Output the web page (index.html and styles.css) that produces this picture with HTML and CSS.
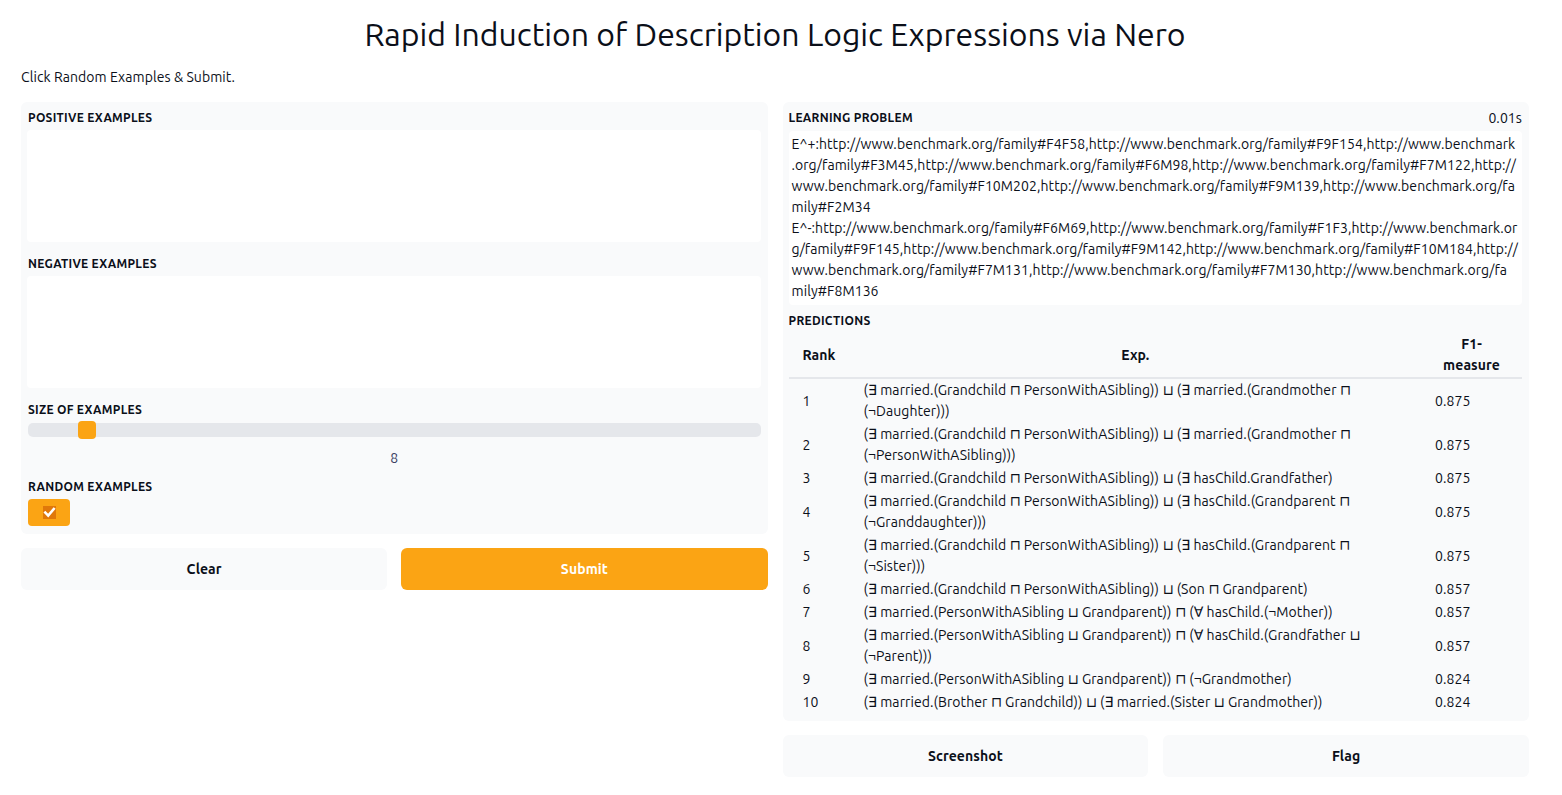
FILE: index.html
```html
<!DOCTYPE html>
<html>
<head>
<meta charset="utf-8">
<link rel="stylesheet" href="styles.css">
</head>
<body>
<div class="page">
  <h1 class="title">Rapid Induction of Description Logic Expressions via Nero</h1>
  <p class="intro">Click Random Examples &amp; Submit.</p>
  <div class="columns">
    <div class="col">
      <div class="panel left-panel">
        <div class="label">POSITIVE EXAMPLES</div>
        <div class="textarea"></div>
        <div class="label gap-top">NEGATIVE EXAMPLES</div>
        <div class="textarea"></div>
        <div class="label gap-top">SIZE OF EXAMPLES</div>
        <div class="slider"><div class="thumb"></div></div>
        <div class="slider-value">8</div>
        <div class="label rand-label">RANDOM EXAMPLES</div>
        <div class="checkbox">
          <div class="check-inner">
            <svg width="13" height="13" viewBox="0 0 13 13"><path d="M2.3 6.6 L5.2 9.6 L10.8 3.0" fill="none" stroke="#fff" stroke-width="2.6" stroke-linecap="square"/></svg>
          </div>
        </div>
      </div>
      <div class="btn-row">
        <div class="btn">Clear</div>
        <div class="btn btn-primary">Submit</div>
      </div>
    </div>
    <div class="col">
      <div class="panel right-panel">
        <div class="label-row"><span class="label label-flush">LEARNING PROBLEM</span><span class="time">0.01s</span></div>
        <div class="lp-box">
          <span class="ln">E^+:http://www.benchmark.org/family#F4F58,http://www.benchmark.org/family#F9F154,http://www.benchmark</span>
          <span class="ln">.org/family#F3M45,http://www.benchmark.org/family#F6M98,http://www.benchmark.org/family#F7M122,http://</span>
          <span class="ln">www.benchmark.org/family#F10M202,http://www.benchmark.org/family#F9M139,http://www.benchmark.org/fa</span>
          <span class="ln">mily#F2M34</span>
          <span class="ln">E^-:http://www.benchmark.org/family#F6M69,http://www.benchmark.org/family#F1F3,http://www.benchmark.or</span>
          <span class="ln">g/family#F9F145,http://www.benchmark.org/family#F9M142,http://www.benchmark.org/family#F10M184,http://</span>
          <span class="ln">www.benchmark.org/family#F7M131,http://www.benchmark.org/family#F7M130,http://www.benchmark.org/fa</span>
          <span class="ln">mily#F8M136</span>
        </div>
        <div class="label label-flush pred-label">PREDICTIONS</div>
        <table class="pred">
          <thead>
            <tr><th class="c-rank">Rank</th><th class="c-exp">Exp.</th><th class="c-f1">F1-<br>measure</th></tr>
          </thead>
          <tbody>
            <tr><td>1</td><td>(∃ married.(Grandchild ⊓ PersonWithASibling)) ⊔ (∃ married.(Grandmother ⊓<br>(¬Daughter)))</td><td>0.875</td></tr>
            <tr><td>2</td><td>(∃ married.(Grandchild ⊓ PersonWithASibling)) ⊔ (∃ married.(Grandmother ⊓<br>(¬PersonWithASibling)))</td><td>0.875</td></tr>
            <tr><td>3</td><td>(∃ married.(Grandchild ⊓ PersonWithASibling)) ⊔ (∃ hasChild.Grandfather)</td><td>0.875</td></tr>
            <tr><td>4</td><td>(∃ married.(Grandchild ⊓ PersonWithASibling)) ⊔ (∃ hasChild.(Grandparent ⊓<br>(¬Granddaughter)))</td><td>0.875</td></tr>
            <tr><td>5</td><td>(∃ married.(Grandchild ⊓ PersonWithASibling)) ⊔ (∃ hasChild.(Grandparent ⊓<br>(¬Sister)))</td><td>0.875</td></tr>
            <tr><td>6</td><td>(∃ married.(Grandchild ⊓ PersonWithASibling)) ⊔ (Son ⊓ Grandparent)</td><td>0.857</td></tr>
            <tr><td>7</td><td>(∃ married.(PersonWithASibling ⊔ Grandparent)) ⊓ (∀ hasChild.(¬Mother))</td><td>0.857</td></tr>
            <tr><td>8</td><td>(∃ married.(PersonWithASibling ⊔ Grandparent)) ⊓ (∀ hasChild.(Grandfather ⊔<br>(¬Parent)))</td><td>0.857</td></tr>
            <tr><td>9</td><td>(∃ married.(PersonWithASibling ⊔ Grandparent)) ⊓ (¬Grandmother)</td><td>0.824</td></tr>
            <tr><td>10</td><td>(∃ married.(Brother ⊓ Grandchild)) ⊔ (∃ married.(Sister ⊔ Grandmother))</td><td>0.824</td></tr>
          </tbody>
        </table>
      </div>
      <div class="btn-row btn-row-right">
        <div class="btn">Screenshot</div>
        <div class="btn">Flag</div>
      </div>
    </div>
  </div>
</div>
</body>
</html>
```
FILE: styles.css
```css
* { box-sizing: border-box; }
html, body { margin: 0; padding: 0; background: #fff; }
body {
  font-family: "Ubuntu", "Lato", "Noto Sans", "DejaVu Sans", sans-serif;
  color: #0b0f19;
  font-size: 14px;
  letter-spacing: 0.08px;
}
.page {
  width: 1529px;
  padding: 14px 0 0 21px;
}
.title {
  margin: 0;
  font-size: 32px;
  font-weight: 400;
  text-align: center;
  line-height: 40px;
  height: 40px;
  letter-spacing: 0;
}
.intro {
  margin: 13px 0 0 0;
  line-height: 20px;
  font-size: 14px;
}
.columns {
  display: flex;
  gap: 15px;
  margin-top: 15px;
  align-items: flex-start;
}
.col { flex: 1 1 0; display: flex; flex-direction: column; gap: 14px; }
.panel {
  background: #f9fafb;
  border-radius: 6px;
  padding: 6px;
}
.label {
  font-size: 12px;
  font-weight: 700;
  line-height: 18px;
  padding-left: 1px;
  color: #0b0f19;
  letter-spacing: 0.28px;
}
.label-flush { padding-left: 0; }
.left-panel { padding: 7px 7px 8px 6px; }
.textarea {
  background: #fff;
  border-radius: 4px;
  height: 112px;
  margin-top: 3px;
}
.gap-top { margin-top: 13px; }
.slider {
  margin: 4px 0 0 1px;
  height: 14px;
  background: #e5e7eb;
  border-radius: 5px;
  position: relative;
}
.thumb {
  position: absolute;
  left: 50px;
  top: -2px;
  width: 18px;
  height: 18px;
  background: #fba414;
  border-radius: 4px;
}
.slider-value {
  text-align: center;
  line-height: 20px;
  margin-top: 11px;
  color: #3c3f63;
  padding-left: 1px;
}
.rand-label { margin-top: 10px; }
.checkbox {
  margin: 3px 0 0 1px;
  width: 42px;
  height: 27px;
  background: #fba414;
  border-radius: 4px;
  display: flex;
  align-items: center;
  justify-content: center;
}
.check-inner {
  width: 13px;
  height: 13px;
  background: #e0780a;
  display: flex;
}
.btn-row { display: flex; gap: 14px; }
.btn-row-right { gap: 15px; }
.btn {
  flex: 1 1 0;
  height: 42px;
  background: #f9fafb;
  border-radius: 6px;
  display: flex;
  align-items: center;
  justify-content: center;
  font-weight: 700;
  font-size: 14px;
}
.btn-primary { background: #fba414; color: #fff; }
.right-panel { padding: 7px 7px 7px 6px; }
.label-row { display: flex; justify-content: space-between; align-items: center; }
.time { font-size: 14px; line-height: 18px; }
.lp-box {
  background: #fff;
  border-radius: 4px;
  margin-top: 4px;
  padding: 3px 3px 3px 3px;
  height: 174px;
}
.ln { display: block; line-height: 21px; white-space: nowrap; }
.pred-label { margin-top: 7px; }
.pred {
  width: 100%;
  border-collapse: collapse;
  margin-top: 3px;
}
.pred th {
  font-weight: 700;
  line-height: 21px;
  padding: 1px 14px;
  border-bottom: 2px solid #e5e7eb;
  height: 44px;
}
.pred .c-rank { text-align: left; width: 61px; }
.pred .c-exp { text-align: center; }
.pred .c-f1 { text-align: center; width: 101px; }
.pred td {
  line-height: 21px;
  padding: 1px 14px;
  vertical-align: middle;
}
```
